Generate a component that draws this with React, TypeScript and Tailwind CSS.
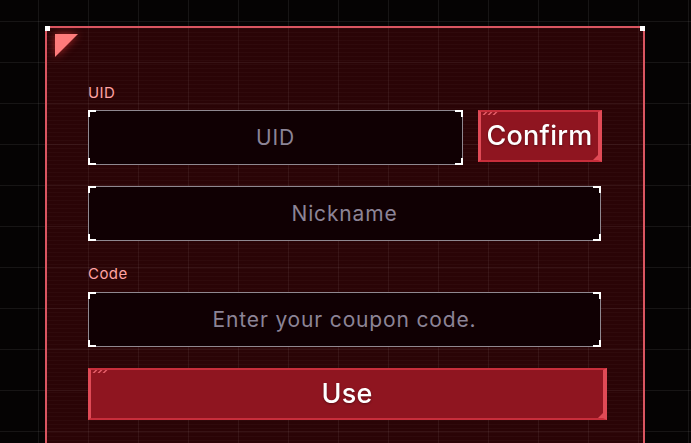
import React from "react"

const font = { fontFamily: "Inter, 'Noto Sans', sans-serif" }

function Corners() {
  return (
    <>
      <span className="pointer-events-none absolute -left-px -top-px h-[7px] w-[8px] border-l-2 border-t-2 border-white" />
      <span className="pointer-events-none absolute -right-px -top-px h-[7px] w-[8px] border-r-2 border-t-2 border-white" />
      <span className="pointer-events-none absolute -bottom-px -left-px h-[7px] w-[8px] border-b-2 border-l-2 border-white" />
      <span className="pointer-events-none absolute -bottom-px -right-px h-[7px] w-[8px] border-b-2 border-r-2 border-white" />
    </>
  )
}

function Field({ placeholder, className }: { placeholder: string; className?: string }) {
  return (
    <div className={`relative h-[55px] border border-[#8f8890] bg-[#100003] ${className ?? ""}`}>
      <input
        placeholder={placeholder}
        className="h-full w-full bg-transparent text-center text-[21px] tracking-[0.04em] text-white outline-none placeholder:text-[#8c8496]"
        style={font}
      />
      <Corners />
    </div>
  )
}

function RedButton({ label, className }: { label: string; className?: string }) {
  return (
    <button
      className={`relative flex h-[52px] items-center justify-center border-y-2 border-l-[3px] border-r-[4px] border-y-[#c72e3b] border-l-[#e04a56] border-r-[#e04a56] bg-[#8f1520] text-[27px] font-medium tracking-[0.01em] text-white ${className ?? ""}`}
      style={font}
    >
      {/* hatch marks */}
      <span className="absolute left-[3px] top-0 flex gap-[3px]">
        <span className="h-[3px] w-[2px] skew-x-[-45deg] bg-[#e8606a]" />
        <span className="h-[3px] w-[2px] skew-x-[-45deg] bg-[#e8606a]" />
        <span className="h-[3px] w-[2px] skew-x-[-45deg] bg-[#e8606a]" />
      </span>
      <span className="absolute bottom-0 right-0 h-0 w-0 border-b-[5px] border-l-[5px] border-b-[#e04a56] border-l-transparent" />
      <span className="relative drop-shadow-[0_1px_1px_rgba(0,0,0,0.35)]">{label}</span>
    </button>
  )
}

export default function App() {
  return (
    <div
      className="h-[443px] w-[691px] overflow-hidden bg-[#050303] bg-[linear-gradient(to_right,rgba(255,255,255,0.07)_1px,transparent_1px),linear-gradient(to_bottom,rgba(255,255,255,0.07)_1px,transparent_1px)] bg-[size:50px_41px] bg-[position:38px_21px] pl-[45px] pt-[26px]"
      style={font}
    >
      <div className="relative h-[460px] w-[600px] border-x-2 border-t-2 border-[#d95560] bg-[#2a0406] bg-[repeating-linear-gradient(to_bottom,rgba(255,255,255,0.025)_0px,rgba(255,255,255,0.025)_1px,transparent_1px,transparent_4px),linear-gradient(to_right,rgba(255,255,255,0.06)_1px,transparent_1px),linear-gradient(to_bottom,rgba(255,255,255,0.06)_1px,transparent_1px)] bg-[size:auto,50px_41px,50px_41px] bg-[position:0_0,-9px_-7px,-9px_-7px] px-[41px] pt-[56px]">
        {/* corner markers */}
        <span className="absolute -left-[2px] -top-[2px] h-[5px] w-[5px] bg-white" />
        <span className="absolute -right-[2px] -top-[2px] h-[5px] w-[5px] bg-white" />
        <span className="absolute left-[8px] top-[6px] h-0 w-0 border-r-[23px] border-t-[23px] border-r-transparent border-t-[#ff7b7b] drop-shadow-[0_0_4px_rgba(255,60,60,0.6)]" />

        <div className="flex w-[519px] flex-col">
          <label className="text-[15px] leading-[18px] tracking-[0.03em] text-[#ffa3a3]">UID</label>
          <div className="mt-[8px] flex items-start gap-[15px]">
            <Field placeholder="UID" className="w-[375px]" />
            <RedButton label="Confirm" className="w-[124px]" />
          </div>
          <Field placeholder="Nickname" className="mt-[21px] w-[513px]" />
          <label className="mt-[24px] text-[15px] leading-[18px] tracking-[0.03em] text-[#ffa3a3]">Code</label>
          <Field placeholder="Enter your coupon code." className="mt-[9px] w-[513px]" />
          <RedButton label="Use" className="mt-[21px] w-[519px]" />
        </div>
      </div>
    </div>
  )
}
